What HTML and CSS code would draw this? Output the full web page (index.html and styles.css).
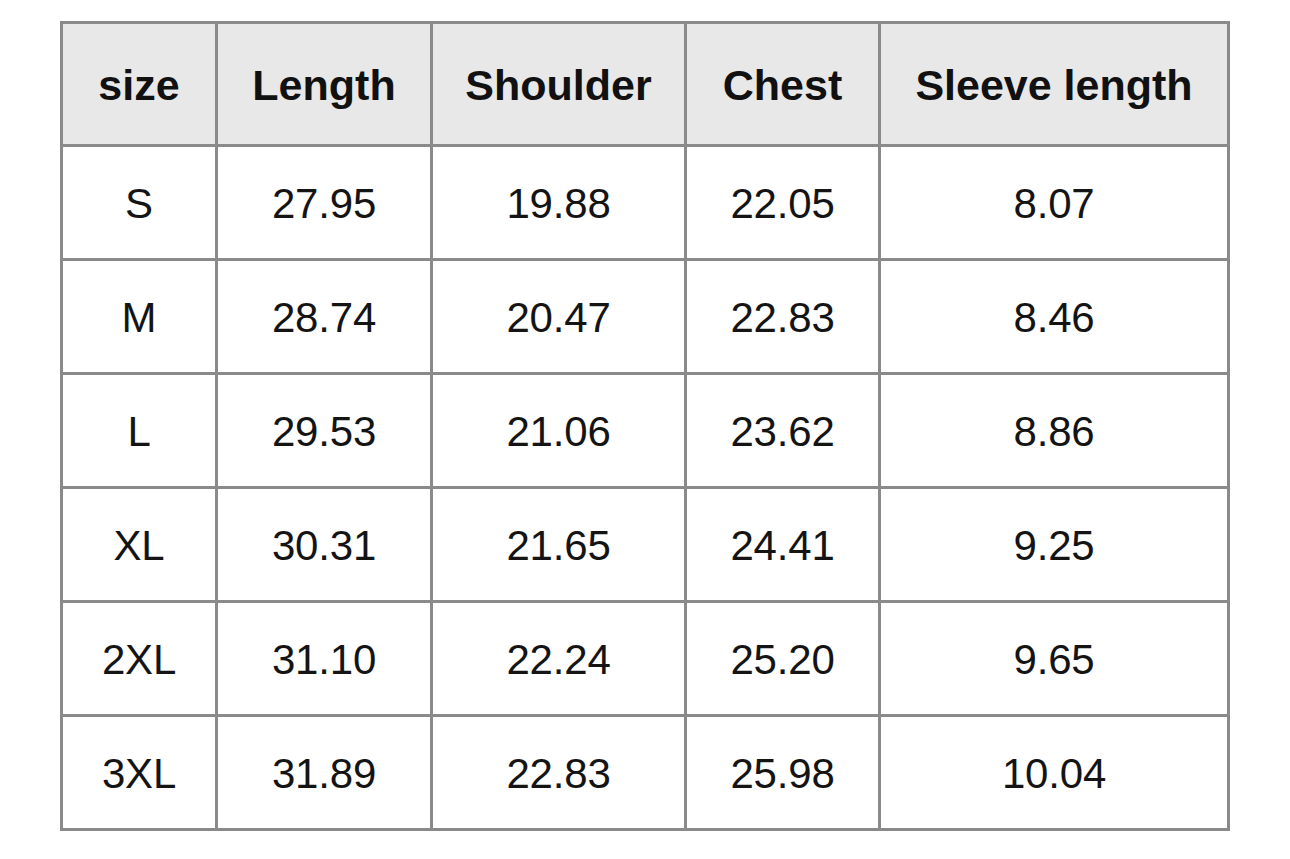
FILE: index.html
```html
<!DOCTYPE html>
<html lang="en">
<head>
<meta charset="utf-8">
<title>Size chart</title>
<link rel="stylesheet" href="styles.css">
</head>
<body>
<div class="page">
  <div class="chart" role="table">
    <div class="cell head">size</div>
    <div class="cell head">Length</div>
    <div class="cell head">Shoulder</div>
    <div class="cell head">Chest</div>
    <div class="cell head">Sleeve length</div>

    <div class="cell">S</div><div class="cell">27.95</div><div class="cell">19.88</div><div class="cell">22.05</div><div class="cell">8.07</div>
    <div class="cell">M</div><div class="cell">28.74</div><div class="cell">20.47</div><div class="cell">22.83</div><div class="cell">8.46</div>
    <div class="cell">L</div><div class="cell">29.53</div><div class="cell">21.06</div><div class="cell">23.62</div><div class="cell">8.86</div>
    <div class="cell">XL</div><div class="cell">30.31</div><div class="cell">21.65</div><div class="cell">24.41</div><div class="cell">9.25</div>
    <div class="cell">2XL</div><div class="cell">31.10</div><div class="cell">22.24</div><div class="cell">25.20</div><div class="cell">9.65</div>
    <div class="cell">3XL</div><div class="cell">31.89</div><div class="cell">22.83</div><div class="cell">25.98</div><div class="cell">10.04</div>
  </div>
</div>
</body>
</html>
```
FILE: styles.css
```css
html, body {
  margin: 0;
  padding: 0;
  background: #ffffff;
}
.page {
  padding: 21px 0 0 60px;
}
.chart {
  display: grid;
  grid-template-columns: 155px 215px 254px 194px 349px;
  grid-template-rows: 123px repeat(6, 114px);
  width: 1170px;
  box-sizing: border-box;
  border-left: 3px solid #8a8a8a;
  border-top: 3px solid #8a8a8a;
  font-family: "Liberation Sans", Arial, Helvetica, sans-serif;
  color: #141414;
}
.cell {
  box-sizing: border-box;
  border-right: 3px solid #8a8a8a;
  border-bottom: 3px solid #8a8a8a;
  display: flex;
  align-items: center;
  justify-content: center;
  padding-top: 3px;
  font-size: 42px;
  letter-spacing: -0.2px;
  background: #ffffff;
}
.head {
  background: #e8e8e8;
  font-weight: bold;
  font-size: 43px;
  letter-spacing: 0;
  padding-top: 2px;
  color: #111111;
}
```
